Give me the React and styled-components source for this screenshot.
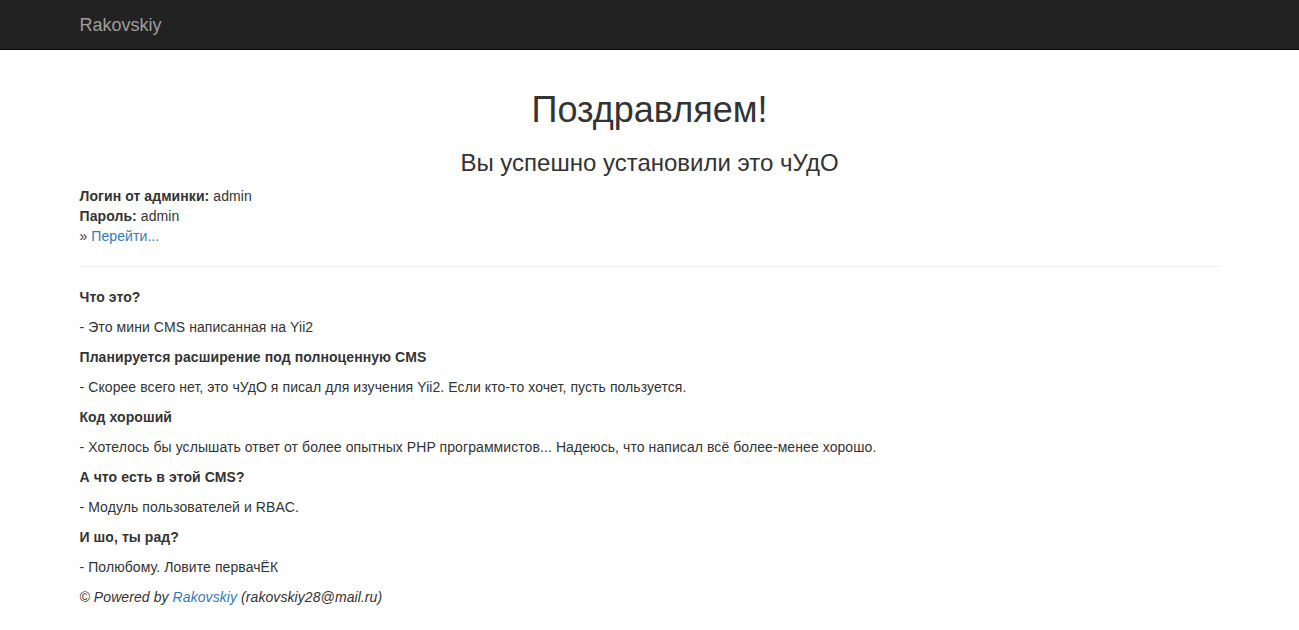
import React from "react";
import styled, { createGlobalStyle } from "styled-components";

const GlobalStyle = createGlobalStyle`
  html, body {
    margin: 0;
    padding: 0;
    background: #fff;
  }
  body {
    font-family: "Liberation Sans", Arial, Helvetica, sans-serif;
    font-size: 14px;
    line-height: 1.42857143;
    color: #333;
  }
  * { box-sizing: border-box; }
`;

const Navbar = styled.nav`
  height: 50px;
  background: #222;
  border-bottom: 1px solid #080808;
`;

const Container = styled.div`
  width: 1170px;
  margin: 0 auto;
  padding: 0 15px;
`;

const Main = styled(Container)`
  padding-top: 20px;
  padding-bottom: 20px;
`;

const Brand = styled.a`
  display: inline-block;
  height: 50px;
  padding: 15px 0;
  font-size: 18px;
  line-height: 20px;
  color: #9d9d9d;
  text-decoration: none;
`;

const Title = styled.h1`
  margin: 20px 0 10px;
  font-size: 36px;
  font-weight: 500;
  line-height: 1.1;
  text-align: center;
`;

const Subtitle = styled.h3`
  margin: 20px 0 10px;
  font-size: 24px;
  font-weight: 500;
  line-height: 1.1;
  text-align: center;
`;

const Para = styled.p`
  margin: 0 0 10px;
  letter-spacing: 0.08px;
  font-style: ${(p) => (p.$italic ? "italic" : "normal")};
`;

const Link = styled.a`
  color: #337ab7;
  text-decoration: none;
`;

const Rule = styled.hr`
  margin: 20px 0;
  border: 0;
  border-top: 1px solid #eee;
`;

const faq = [
  ["Что это?", "- Это мини CMS написанная на Yii2"],
  [
    "Планируется расширение под полноценную CMS",
    "- Скорее всего нет, это чУдО я писал для изучения Yii2. Если кто-то хочет, пусть пользуется.",
  ],
  [
    "Код хороший",
    "- Хотелось бы услышать ответ от более опытных PHP программистов... Надеюсь, что написал всё более-менее хорошо.",
  ],
  ["А что есть в этой CMS?", "- Модуль пользователей и RBAC."],
  ["И шо, ты рад?", "- Полюбому. Ловите первачЁК"],
];

export default function App() {
  return (
    <>
      <GlobalStyle />
      <Navbar>
        <Container>
          <Brand href="#">Rakovskiy</Brand>
        </Container>
      </Navbar>
      <Main>
        <Title>Поздравляем!</Title>
        <Subtitle>Вы успешно установили это чУдО</Subtitle>
        <Para>
          <b>Логин от админки:</b> admin
          <br />
          <b>Пароль:</b> admin
          <br />
          » <Link href="#">Перейти...</Link>
        </Para>
        <Rule />
        {faq.map(([q, a]) => (
          <React.Fragment key={q}>
            <Para>
              <b>{q}</b>
            </Para>
            <Para>{a}</Para>
          </React.Fragment>
        ))}
        <Para $italic>
          © Powered by <Link href="#">Rakovskiy</Link> (rakovskiy28@mail.ru)
        </Para>
      </Main>
    </>
  );
}
